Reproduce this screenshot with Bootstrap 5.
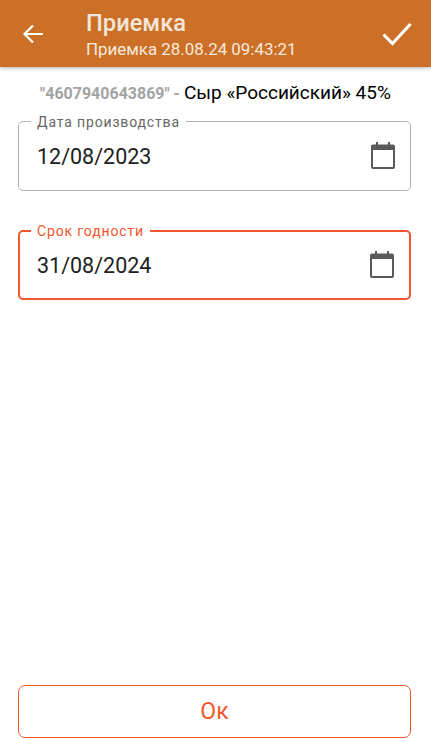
<!DOCTYPE html>
<html lang="ru">
<head>
<meta charset="utf-8">
<title>Приемка</title>
<link href="https://cdn.jsdelivr.net/npm/bootstrap@5.3.0/dist/css/bootstrap.min.css" rel="stylesheet">
<style>
html,body{height:739px;overflow:hidden}
body{font-family:Roboto,"Liberation Sans",sans-serif;background:#fff}
.shell{height:739px}
.appbar{height:67px;background:#cd7027;color:#fff;box-shadow:0 1px 4px rgba(0,0,0,.3);padding:0 19px 0 22px;flex:none}
.appbar-text{margin-left:42px;padding-top:1px}
.appbar-title{font-size:23.7px;font-weight:500;line-height:28px;color:#f3e6da}
.appbar-sub{font-size:16.9px;line-height:22px;margin-top:1px;color:#f6e9dd}
.goods{font-size:19px;line-height:22px;margin-top:15px;color:#000;padding-left:2px}
.goods-code{color:#a3a3a3;font-weight:700;font-size:16px;line-height:1}
.content{padding:0 20px 1px 18px;flex:1}
.datefield{position:relative;height:70px;border:1.5px solid #b3b3b3;border-radius:5px;padding:0 15px 0 18px;margin-top:16.5px}
.datefield+.datefield{margin-top:39px}
.field-label{position:absolute;top:-8px;left:12px;padding:0 6px;background:#fff;font-size:14px;line-height:16px;letter-spacing:.85px;color:#666}
.field-value{font-size:21.5px;color:#212121;padding-top:3px}
.datefield.active-field{border:2px solid #f4562d}
.active-field .field-label{color:#f4562d;top:-9px;left:11px}
.active-field .field-value{margin-left:-1px}
.ok-btn{height:53px;border:1.5px solid #f4562d;border-radius:7px;color:#f4562d;background:#fff;font-size:23px;line-height:1;width:100%}
.ok-btn:hover{color:#f4562d;background:#fff;border-color:#f4562d}
</style>
</head>
<body>
<div class="shell d-flex flex-column">
  <header class="appbar d-flex align-items-center">
    <svg width="22" height="22" viewBox="0 0 22 22" fill="none" stroke="#fff" stroke-width="2.2" aria-label="Назад"><path d="M21 11H2.500M11 2.500 2.500 11l8.500 8.500"/></svg>
    <div class="appbar-text flex-grow-1">
      <div class="appbar-title">Приемка</div>
      <div class="appbar-sub">Приемка 28.08.24 09:43:21</div>
    </div>
    <svg width="30" height="24" viewBox="0 0 30 24" fill="none" stroke="#fff" stroke-width="3" aria-label="Готово"><path d="M1.500 12.500 10.500 21.500 28.500 2"/></svg>
  </header>
  <main class="content d-flex flex-column">
    <div class="goods text-center text-nowrap"><span class="goods-code">"4607940643869" - </span>Сыр «Российский» 45%</div>
    <div class="datefield d-flex align-items-center justify-content-between">
      <span class="field-label">Дата производства</span>
      <span class="field-value">12/08/2023</span>
      <svg width="24" height="27" viewBox="0 0 24 27"><path fill="#5a5a5a" d="M2 2.500h3V0h2v2.500h10V0h2v2.500h3a2 2 0 0 1 2 2V25a2 2 0 0 1-2 2H2a2 2 0 0 1-2-2V4.500a2 2 0 0 1 2-2Z"/><path fill="#fff" d="M2 8h20v17H2z"/></svg>
    </div>
    <div class="datefield active-field d-flex align-items-center justify-content-between">
      <span class="field-label">Срок годности</span>
      <span class="field-value">31/08/2024</span>
      <svg width="24" height="27" viewBox="0 0 24 27"><path fill="#5a5a5a" d="M2 2.500h3V0h2v2.500h10V0h2v2.500h3a2 2 0 0 1 2 2V25a2 2 0 0 1-2 2H2a2 2 0 0 1-2-2V4.500a2 2 0 0 1 2-2Z"/><path fill="#fff" d="M2 8h20v17H2z"/></svg>
    </div>
    <button type="button" class="btn ok-btn mt-auto">Ок</button>
  </main>
</div>
<script src="https://cdn.jsdelivr.net/npm/bootstrap@5.3.0/dist/js/bootstrap.bundle.min.js"></script>
</body>
</html>
